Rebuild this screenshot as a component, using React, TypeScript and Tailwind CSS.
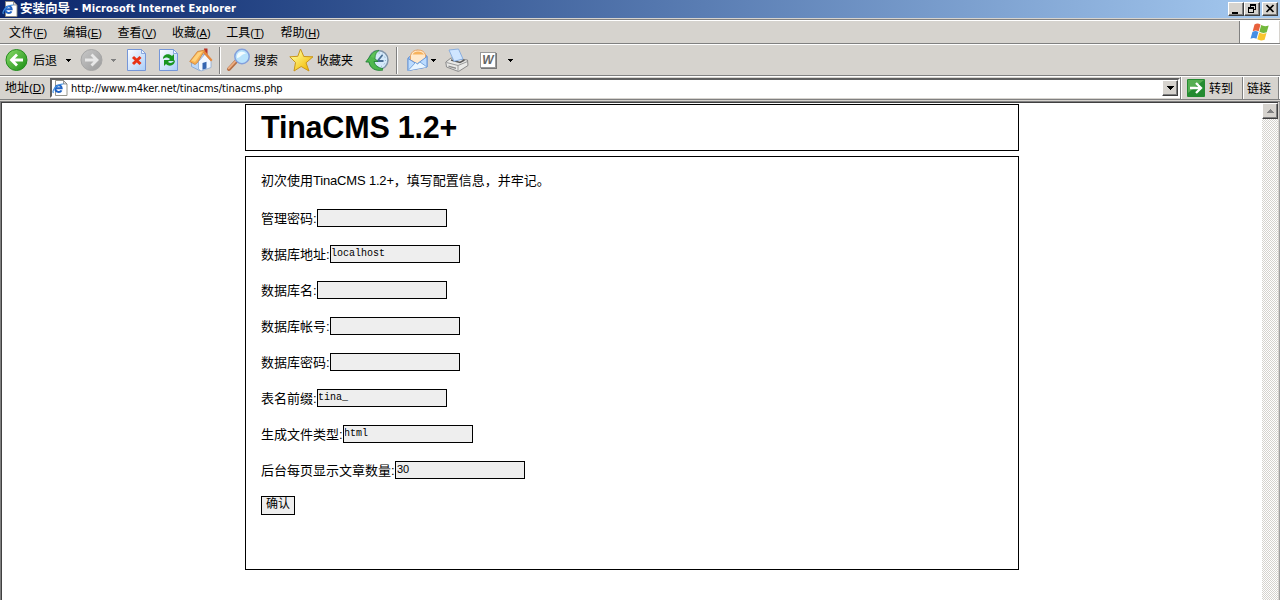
import React from 'react';

const UI = "font-['Liberation_Sans','Noto_Sans_CJK_SC',sans-serif]";
const LATIN = "font-['DejaVu_Sans_Condensed','DejaVu_Sans','Noto_Sans_CJK_SC',sans-serif]";

function Caret({ className, dim }: { className: string; dim?: boolean }) {
  return (
    <svg className={`h-[3px] w-[5px] shrink-0 ${className}`} viewBox="0 0 5 3" shapeRendering="crispEdges">
      <path d="M0 0h5v1H4v1H3v1H2V2H1V1H0z" fill={dim ? '#808080' : '#000'} />
    </svg>
  );
}

function PageIcon({ className }: { className: string }) {
  return (
    <svg className={`h-4 w-4 shrink-0 ${className}`} viewBox="0 0 16 16">
      <path d="M3.500 .5h8l3.500 3.500v11.500H3.500z" fill="#fff" stroke="#8a8a80" strokeWidth=".9" />
      <path d="M11.500 .5V4H15z" fill="#ddd" stroke="#777" strokeWidth=".7" />
      <path d="M3.500 8.300h6.200C9.500 4.300 3.700 4.500 3.300 8.600c-.1 4 5 4.300 6.200 1.800" fill="none" stroke="#1f62c4" strokeWidth="1.900" />
      <path d="M1.500 12.800C-.5 10.500 5 3.700 11.500 4" fill="none" stroke="#3f8fe0" strokeWidth="1.200" />
    </svg>
  );
}

function Circle({ className, dim }: { className: string; dim?: boolean }) {
  return (
    <svg className={`h-6 w-6 shrink-0 ${className}`} viewBox="0 0 24 24">
      <defs>
        <linearGradient id={dim ? 'cgray' : 'cgreen'} x1="0" y1="0" x2="1" y2="1">
          <stop offset="0" stopColor={dim ? '#c8c8c8' : '#8bdc69'} />
          <stop offset="1" stopColor={dim ? '#9a9a9a' : '#188c13'} />
        </linearGradient>
      </defs>
      <circle cx="12.500" cy="12" r="10.500" fill={dim ? 'url(#cgray)' : 'url(#cgreen)'} stroke={dim ? '#a6a6a6' : '#238c1c'} />
      <path
        d={dim ? 'M6 12h11M12.500 6.500L18 12l-5.500 5.500' : 'M19 12H8M13 6.500L7.500 12l5.500 5.500'}
        fill="none"
        stroke={dim ? '#e8e8e8' : '#fff'}
        strokeWidth="2.800"
      />
    </svg>
  );
}

function Sheet({ className, children }: { className: string; children: React.ReactNode }) {
  return (
    <svg className={`h-6 w-5 shrink-0 ${className}`} viewBox="0 0 20 24">
      <defs>
        <linearGradient id="sheet" x1="0" y1="0" x2="1" y2="1">
          <stop offset="0" stopColor="#fff" />
          <stop offset="1" stopColor="#a9cdf8" />
        </linearGradient>
      </defs>
      <path d="M.5 1.500h14l4 4v17H.5z" fill="url(#sheet)" stroke="#7596d8" />
      <path d="M14.500 1.500v4h4z" fill="#eef5ff" stroke="#7596d8" strokeWidth=".8" />
      {children}
    </svg>
  );
}

function HomeIcon() {
  return (
    <svg className="ml-[10px] h-6 w-6 shrink-0" viewBox="0 0 24 24">
      <path d="M15 .5h3.500V9H15z" fill="#b93125" />
      <path d="M2.500 11.500L10 4l5 3-3 14.500-1.500 1-8-4z" fill="#bcd8f8" stroke="#7d9fd1" strokeWidth=".8" />
      <path d="M9.500 13.500L16 6l6 7v6.500l-10 3.500-2.500-2z" fill="#f3f8ff" stroke="#8ca9d3" strokeWidth=".8" />
      <path d="M.7 13.500L8.500 3.500 16 2l-7.500 12.500-2.500 2z" fill="#f8b050" stroke="#cc813b" strokeWidth=".8" />
      <path d="M2.500 12.500L9 4.500l4.500-1L6 14z" fill="#ffd27c" />
      <path d="M15.500 2.500l8 9.500-1.500 1.500L16 7l-1.500-2z" fill="#e7883a" />
      <path d="M13.500 15l4-1.200v6.700l-4 1.300z" fill="#3565b0" />
    </svg>
  );
}

function SearchIcon() {
  return (
    <svg className="ml-[5px] h-6 w-6 shrink-0" viewBox="0 0 24 24">
      <path d="M3 21l7-7.500" stroke="#b56f45" strokeWidth="4" strokeLinecap="round" />
      <path d="M2.700 20.300l7-7.300" stroke="#efb083" strokeWidth="1.800" strokeLinecap="round" />
      <circle cx="16" cy="8.500" r="7.200" fill="#b9e3fc" stroke="#83a0dc" strokeWidth="1.500" />
      <path d="M11 10c-1-7 7-8 9-4-4-1-5 4-9 4" fill="#f2fcff" />
    </svg>
  );
}

function StarIcon() {
  return (
    <svg className="ml-[11px] h-6 w-[25px] shrink-0" viewBox="0 0 25 24">
      <defs>
        <linearGradient id="star" x1="0" y1="0" x2="1" y2="1">
          <stop offset=".2" stopColor="#fff88c" />
          <stop offset=".9" stopColor="#f2b800" />
        </linearGradient>
      </defs>
      <path d="M11.500 1l3.300 7.500 9.200.3-7 6 3 8.200-7.800-4.500L5 23l1.500-8.500L.8 8.800l8-.5z" fill="url(#star)" stroke="#c9951a" />
    </svg>
  );
}

function HistoryIcon() {
  return (
    <svg className="ml-[12px] h-6 w-6 shrink-0" viewBox="0 0 24 24">
      <circle cx="13.500" cy="12" r="9.500" fill="#d5eafa" stroke="#8195a9" strokeWidth="1.500" />
      <circle cx="13.500" cy="12" r="7" fill="none" stroke="#7fa5c4" strokeDasharray="1 2.660" />
      <path d="M12.500 13l5-6M12.500 13h6" stroke="#4a6f94" strokeWidth="1.800" />
      <path d="M18 22C10 23.500 5 20 4 14H.8L6 7l7 6.500H9c1 4 4 6.500 9 7" fill="#4fb84f" stroke="#218236" strokeWidth=".9" />
      <path d="M5 8.500C7 4.500 10 2.500 14 2.500 11.500 4 10 6.500 10 10.500" fill="#5cc258" stroke="#2b893c" strokeWidth=".8" />
    </svg>
  );
}

function MailIcon() {
  return (
    <svg className="ml-[9px] h-6 w-[22px] shrink-0" viewBox="0 0 22 24">
      <path d="M1 10l9-8 10 6v11L1 22.500z" fill="#93bdf2" stroke="#6f98d5" />
      <path d="M3.500 7.500Q5 2 11 2t7.500 5v5l-8 4-7-4z" fill="#ffe9cc" stroke="#e6a362" />
      <path d="M5.500 6.500Q7 3.500 11 3.500t6 3z" fill="#f7b25c" />
      <path d="M1 10.500l9 5.500 10-7.500V19L1 22.500z" fill="#bcdcff" stroke="#6995d5" />
      <path d="M1 22.500l7.500-8 2 1.500 2.500-2L20 19" fill="#e8f5ff" stroke="#7ba8dd" />
    </svg>
  );
}

function PrinterIcon() {
  return (
    <svg className="ml-[9px] h-6 w-6 shrink-0" viewBox="0 0 24 24">
      <path d="M.8 14L6 10l16.500 2 .5 5.500-9.500 6L1.500 19z" fill="#e9e9e7" stroke="#8a8a8a" />
      <path d="M1.500 14.500l11.500 3 9.500-4M13 17.500v5.500" fill="none" stroke="#999" />
      <path d="M6 12l9 2.500 4.500-2.500" fill="none" stroke="#5b5b5b" strokeWidth="1.500" />
      <path d="M4 2l9.500-1L18 11l-9 2.300z" fill="#cfe5ff" stroke="#82a9de" strokeWidth=".9" />
      <path d="M3.500 17.500l7.500 2v1.500l-7.500-2z" fill="#8f8f8f" />
    </svg>
  );
}

function Divider({ className }: { className: string }) {
  return <div className={`h-[27px] w-[2px] shrink-0 border-l border-l-[#808080] bg-white ${className}`} />;
}

const raised = 'border border-t-white border-l-white border-r-[#404040] border-b-[#404040] bg-[#d6d3ce] shadow-[inset_-1px_-1px_0_#808080]';

function TitleBar() {
  return (
    <div className="flex h-[18px] items-center bg-linear-to-r from-[#0a246a] to-[#a6caf0] text-white">
      <PageIcon className="ml-[2px]" />
      <span className={`ml-[2px] w-[54px] text-[12.500px] font-bold whitespace-pre ${UI}`}>安装向导</span>
      <span className={`w-[170px] text-[11px] font-bold whitespace-nowrap tracking-[0.090px] ${LATIN}`}>- Microsoft Internet Explorer</span>
      <div className="mr-[2px] ml-auto flex">
        <div className={`h-[14px] w-4 ${raised}`}>
          <svg viewBox="0 0 14 12" className="h-3 w-[14px]"><path d="M3 9h6v2H3z" fill="#000" /></svg>
        </div>
        <div className={`h-[14px] w-4 ${raised}`}>
          <svg viewBox="0 0 14 12" className="h-3 w-[14px]" shapeRendering="crispEdges">
            <path d="M5 1h6v6H9V6h1V3H6v1H5zM3 4h6v6H3zM4 6v3h4V6z" fill="#000" fillRule="evenodd" />
          </svg>
        </div>
        <div className={`ml-[2px] h-[14px] w-4 ${raised}`}>
          <svg viewBox="0 0 14 12" className="h-3 w-[14px]"><path d="M3.500 2l7 7M10.500 2l-7 7" stroke="#000" strokeWidth="1.700" /></svg>
        </div>
      </div>
    </div>
  );
}

const menus = [['文件', 'F'], ['编辑', 'E'], ['查看', 'V'], ['收藏', 'A'], ['工具', 'T'], ['帮助', 'H']];

function MenuBar() {
  return (
    <div className="mt-px flex h-[25px] border-t border-b border-t-[#808080] border-b-[#808080] shadow-[inset_0_1px_0_#fff]">
      <div className="flex flex-1 items-center pt-[2px] pl-[9px]">
        {menus.map(([name, key]) => (
          <div key={key} className={`w-[54.300px] text-[12px] whitespace-nowrap ${UI}`}>
            {name}<span className="text-[11px]">(<u>{key}</u>)</span>
          </div>
        ))}
      </div>
      <div className="mt-px flex w-[40px] justify-center border-l border-l-[#808080] bg-white">
        <svg className="mt-[1px] h-5 w-5" viewBox="0 0 20 20">
          <path d="M4.500 2.500q3-2 6 0L8.700 9.300q-3-1.800-6 0z" fill="#e8613c" />
          <path d="M11.200 3q3 2 7.500 .5L16.700 10.300q-4.300 1.500-7.300-.5z" fill="#73b83c" />
          <path d="M2.400 10q3-1.800 6 0L6.500 16.800q-3-1.800-6 0z" fill="#458ee4" />
          <path d="M9.200 10.500q3 2 7.300 .5L14.600 17.800q-4.300 1.500-7.300-.5z" fill="#f8c52f" />
        </svg>
      </div>
      <div className="mt-px w-px bg-[#d6d3ce]" />
    </div>
  );
}

function Toolbar() {
  const label = `pt-px text-[12px] shrink-0 whitespace-nowrap ${UI}`;
  return (
    <div className="flex h-8 items-center border-t border-b border-t-white border-b-[#808080]">
      <Circle className="ml-[4px]" />
      <span className={`ml-[5px] w-6 ${label}`}>后退</span>
      <Caret className="ml-[9px]" />
      <Circle dim className="ml-[8px]" />
      <Caret dim className="ml-[8px]" />
      <Sheet className="ml-[11px]">
        <path d="M6 9l7.500 7M13.500 9L6 16" stroke="#e83316" strokeWidth="3" />
      </Sheet>
      <Sheet className="ml-[12px]">
        <path d="M4 11c0-5 6-6 9-3l2-2v7H9l2-2c-3-2-4-2-7 0" fill="#189620" />
        <path d="M16 12c0 6-6 7-9 4l-2 2v-6h6l-2 2c3 2 4 1 7-2" fill="#189620" />
      </Sheet>
      <HomeIcon />
      <Divider className="ml-[6px]" />
      <SearchIcon />
      <span className={`ml-[4px] w-6 ${label}`}>搜索</span>
      <StarIcon />
      <span className={`ml-[3px] w-9 ${label}`}>收藏夹</span>
      <HistoryIcon />
      <Divider className="ml-[7px]" />
      <MailIcon />
      <Caret className="ml-[2px]" />
      <PrinterIcon />
      <div className="ml-[11px] flex h-4 w-4 items-center justify-center border border-[#999] bg-white font-['Liberation_Sans',sans-serif] text-[12px] leading-none font-bold text-[#666] italic shadow-[1px_1px_0_#777]">W</div>
      <Caret className="ml-[12px]" />
    </div>
  );
}

function AddressBar() {
  return (
    <div className="flex h-6 items-center border-t border-b border-t-white border-b-[#808080]">
      <span className={`ml-[5px] w-[45px] pt-px text-[12px] whitespace-nowrap ${UI}`}>地址<span className="text-[11.500px]">(<u>D</u>)</span></span>
      <div className="flex h-[20px] w-[1130px] items-center border-2 border-t-[#606060] border-r-white border-b-white border-l-[#606060] bg-white">
        <PageIcon className="" />
        <span className={`ml-[3px] pt-[2px] text-[11px] whitespace-nowrap tracking-[-0.050px] ${LATIN}`}>http://www.m4ker.net/tinacms/tinacms.php</span>
        <div className={`ml-auto flex h-4 w-4 items-center justify-center ${raised}`}>
          <svg className="h-1 w-[7px]" viewBox="0 0 7 4" shapeRendering="crispEdges"><path d="M0 0h7v1H6v1H5v1H4v1H3V3H2V2H1V1H0z" /></svg>
        </div>
      </div>
      <div className="h-[22px] w-[2px] border-l border-l-[#808080] bg-white" />
      <svg className="ml-[5px] h-[18px] w-[18px]" viewBox="0 0 18 18">
        <rect width="18" height="18" rx="1" fill="#248b31" />
        <path d="M1 1h16L1 14z" fill="#55ae52" />
        <path d="M3 9h10M9 4l5 5-5 5" fill="none" stroke="#fff" strokeWidth="2.300" />
      </svg>
      <span className={`ml-[4px] w-[33px] pt-px text-[12px] whitespace-nowrap ${UI}`}>转到</span>
      <div className="h-[22px] w-[2px] border-l border-l-[#808080] bg-white" />
      <span className={`ml-[3px] pt-px text-[12px] whitespace-nowrap ${UI}`}>链接</span>
      <div className="ml-auto h-[22px] w-[2px] border-l border-l-[#808080] bg-white" />
    </div>
  );
}

const fields = [
  { label: '管理密码', value: '', width: 'w-[56px]' },
  { label: '数据库地址', value: 'localhost', width: 'w-[69px]' },
  { label: '数据库名', value: '', width: 'w-[56px]' },
  { label: '数据库帐号', value: '', width: 'w-[69px]' },
  { label: '数据库密码', value: '', width: 'w-[69px]' },
  { label: '表名前缀', value: 'tina_', width: 'w-[56px]' },
  { label: '生成文件类型', value: 'html', width: 'w-[82px]' },
  { label: '后台每页显示文章数量', value: '30', width: 'w-[134px]' },
];

export default function App() {
  return (
    <div className={`flex h-[600px] w-[1280px] flex-col overflow-hidden bg-[#d6d3ce] text-black ${UI}`}>
      <TitleBar />
      <MenuBar />
      <Toolbar />
      <AddressBar />
      <div className="mt-px flex min-h-0 flex-1 border-t border-l border-t-[#808080] border-l-[#808080]">
        <main className="min-w-0 flex-1 border-t border-l border-t-[#404040] border-l-[#404040] bg-white pt-[1px] pl-[243px]">
          <header className="h-[47px] w-[774px] border border-black pl-[15px]">
            <h1 className="text-[30.500px] leading-[45px] font-bold tracking-[-0.200px] whitespace-nowrap">TinaCMS 1.2+</h1>
          </header>
          <section className="mt-[5px] h-[414px] w-[774px] border border-black pl-[15px]">
            <p className="mt-[14px] h-[20px] text-[13px] leading-[20px] whitespace-nowrap">初次使用<span className="tracking-[-0.180px]">TinaCMS 1.2+</span>，填写配置信息，并牢记。</p>
            <form className="mt-[18px]">
              {fields.map((f) => (
                <div key={f.label} className="mb-[18px] flex h-[18px] items-center">
                  <label className={`shrink-0 pt-px text-[13px] leading-[18px] whitespace-nowrap ${f.width}`}>{f.label}:</label>
                  <input
                    className={`h-[18px] w-[130px] rounded-none border border-black bg-[#eee] px-[1px] pb-[2px] leading-[14px] outline-none ${f.value === '30' ? 'text-[11px]' : "-indent-px font-['Liberation_Mono',monospace] text-[10px]"}`}
                    defaultValue={f.value}
                  />
                </div>
              ))}
              <button type="button" className="-mt-px block h-[19px] w-[34px] border border-black bg-[#eee] pb-[2px] text-[12px] leading-[15px] whitespace-nowrap">确认</button>
            </form>
          </section>
        </main>
        <aside className="w-4 shrink-0 border-t border-t-[#404040] bg-white bg-[repeating-conic-gradient(#d6d3ce_0_25%,#fff_0_50%)] bg-size-[2px_2px]">
          <div className={`flex h-4 w-4 items-center justify-center ${raised}`}>
            <svg className="h-1 w-[7px]" viewBox="0 0 7 4" shapeRendering="crispEdges"><path d="M3 0h1v1h1v1h1v1h1v1H0V3h1V2h1V1h1z" fill="#808080" /></svg>
          </div>
        </aside>
        <div className="w-[2px] shrink-0 border-r border-r-[#a0a0a0] bg-[#d6d3ce]" />
      </div>
    </div>
  );
}
